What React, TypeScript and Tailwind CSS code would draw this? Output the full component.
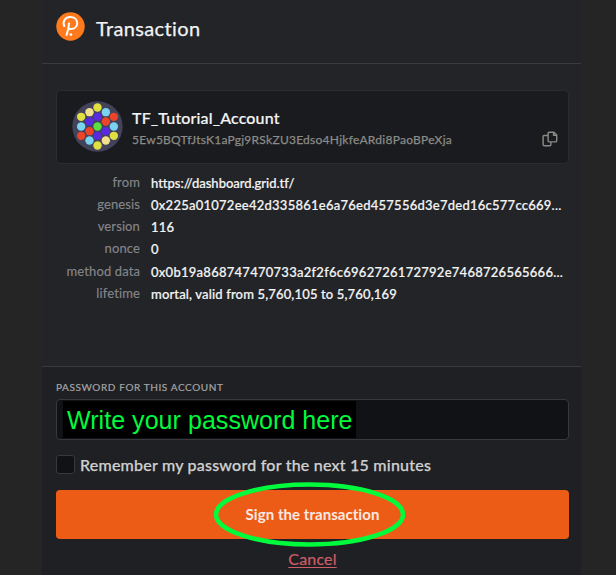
import React from 'react';

const YELLOW = '#e0e040';
const CREAM = '#f3e08c';
const SKY = '#78d4f0';
const RED = '#ec4428';
const VIOLET = '#5a2ae0';
const GREEN = '#5ce040';

const dots: [number, number, string][] = [
  [99, 41, YELLOW],
  [75, 55, CREAM],
  [124, 55, SKY],
  [50, 69, YELLOW],
  [99, 69, VIOLET],
  [148, 69, RED],
  [75, 83, VIOLET],
  [124, 83, RED],
  [50, 98, SKY],
  [99, 98, GREEN],
  [148, 98, SKY],
  [75, 112, RED],
  [124, 112, VIOLET],
  [50, 126, RED],
  [99, 126, VIOLET],
  [148, 126, YELLOW],
  [75, 140, SKY],
  [124, 140, CREAM],
  [99, 155, YELLOW],
];

function Identicon() {
  return (
    <svg className="h-[51px] w-[51px] shrink-0" viewBox="22.5 21.5 153 153">
      <circle cx="99" cy="98" r="75.5" fill="#42425a" />
      {dots.map(([x, y, fill]) => (
        <circle key={`${x}-${y}`} cx={x} cy={y} r="12.6" fill={fill} />
      ))}
    </svg>
  );
}

function Logo() {
  return (
    <svg className="h-[29px] w-[29px] shrink-0" viewBox="0 0 29 29" fill="none">
      <circle cx="14.5" cy="14.5" r="14.2" fill="#ff7a1c" />
      <path
        d="M8.3 14C6.2 9.2 9.4 5.1 14.2 5.1c4.1 0 7 2.6 7 6.1 0 3.4-2.8 5.8-6.3 5.8h-2.2M13 11.4c-.2 3.8-.9 7.4-2.4 11.4"
        stroke="#fff"
        strokeWidth="2"
        strokeLinecap="round"
      />
      <circle cx="14.9" cy="22.6" r="1.4" fill="#fff" />
    </svg>
  );
}

function CopyIcon() {
  return (
    <svg
      className="h-[16px] w-[16px]"
      viewBox="0 0 16 16"
      fill="none"
      stroke="#8b8b88"
      strokeWidth="1.4"
      strokeLinejoin="round"
    >
      <path d="M7.3 1.2h4.6l2.8 2.8v5.7q0 1.2-1.2 1.2H7.3q-1.2 0-1.2-1.2V2.4q0-1.2 1.2-1.2z" />
      <path d="M11.6 1.4v2.9h2.9" />
      <path d="M6 4.5H2.3q-1.2 0-1.2 1.2v7.8q0 1.2 1.2 1.2h5.4q1.2 0 1.2-1.2V11" />
    </svg>
  );
}

const rows = [
  { label: 'from', value: 'https://dashboard.grid.tf/', spacing: 'tracking-[-0.02px]' },
  {
    label: 'genesis',
    value: '0x225a01072ee42d335861e6a76ed457556d3e7ded16c577cc669...',
    spacing: 'tracking-[0.25px]',
  },
  { label: 'version', value: '116', spacing: 'tracking-[0.2px]' },
  { label: 'nonce', value: '0', spacing: 'tracking-[0px]' },
  {
    label: 'method data',
    value: '0x0b19a868747470733a2f2f6c6962726172792e7468726565666...',
    spacing: 'tracking-[0.26px]',
  },
  { label: 'lifetime', value: 'mortal, valid from 5,760,105 to 5,760,169', spacing: 'tracking-[0.15px]' },
];

export default function App() {
  return (
    <div className="h-[575px] w-[616px] overflow-hidden bg-[#252525] pl-[42px] font-['Lato',sans-serif] [font-variant-ligatures:none]">
      <main className="flex h-full w-[539px] flex-col bg-[#222427]">
        <header className="flex h-[64px] shrink-0 border-b border-[#3a3b3f] pl-[14px] pt-[12px]">
          <Logo />
          <h1 className="ml-[11px] mt-[2px] whitespace-nowrap text-[20px] leading-[28px] tracking-[0.36px] text-[#f2f2f2] [-webkit-text-stroke:0.25px]">
            Transaction
          </h1>
        </header>

        <section className="mx-[14px] mt-[26px] flex h-[74px] w-[513px] shrink-0 rounded-[4px] border border-[#2b2c2f] bg-[#1a1b1e] pl-[15px] pt-[10px]">
          <Identicon />
          <div className="ml-[9px] flex-1 whitespace-nowrap">
            <div className="mt-[6px] text-[16px] font-medium leading-[22px] tracking-[0.14px] text-[#f4f4f4] [-webkit-text-stroke:0.2px]">
              TF_Tutorial_Account
            </div>
            <div className="mt-[2px] text-[12px] leading-[18px] tracking-[0.26px] text-[#8b8b88] [-webkit-text-stroke:0.25px]">
              5Ew5BQTfJtsK1aPgj9RSkZU3Edso4HjkfeARdi8PaoBPeXja
            </div>
          </div>
          <button className="mr-[10px] mt-[30px] h-[16px]" aria-label="Copy address">
            <CopyIcon />
          </button>
        </section>

        <dl className="mt-[8px] shrink-0">
          {rows.map((row) => (
            <div key={row.label} className="flex h-[22.15px] whitespace-nowrap">
              <dt className="w-[98px] text-right text-[13px] leading-[21px] tracking-[0.12px] text-[#85868a] [-webkit-text-stroke:0.15px]">
                {row.label}
              </dt>
              <dd
                className={`ml-[11px] text-[13px] font-medium leading-[23px] text-[#f4f4f4] [-webkit-text-stroke:0.2px] ${row.spacing}`}
              >
                {row.value}
              </dd>
            </div>
          ))}
        </dl>

        <footer className="mt-auto h-[209px] shrink-0 border-t border-[#3a3b3f] bg-[#1e2024] px-[14px] pt-[13px]">
          <label className="block whitespace-nowrap text-[10px] leading-[14px] tracking-[0.6px] text-[#a5a5a5] [-webkit-text-stroke:0.2px]">
            PASSWORD FOR THIS ACCOUNT
          </label>
          <div className="mt-[5px] flex h-[41px] w-[513px] rounded-[4px] border border-[#38393d] bg-[#111216] pl-[6px] pt-[1px]">
            <div className="h-[37px] w-[293px] whitespace-nowrap bg-black pl-[4px] font-['Liberation_Sans',sans-serif] text-[25px] leading-[38px] tracking-[0.05px] text-[#00fb3c]">
              Write your password here
            </div>
          </div>
          <div className="mt-[15px] flex h-[19px] items-center">
            <span className="h-[19px] w-[19px] rounded-[3px] border border-[#38393d] bg-[#111216]" />
            <span className="ml-[5px] whitespace-nowrap text-[16px] font-medium leading-[20px] tracking-[0.22px] text-[#d0d0d0] [-webkit-text-stroke:0.25px]">
              Remember my password for the next 15 minutes
            </span>
          </div>
          <div className="relative mt-[16px]">
            <button className="flex h-[49px] w-[513px] items-center justify-center rounded-[4px] bg-[#ed5c16] text-[15px] font-bold tracking-[0.05px] text-[#fbe9e1]">
              Sign the transaction
            </button>
            <svg className="absolute left-[157px] top-[-8px] h-[66px] w-[194px]" viewBox="0 0 194 66" fill="none">
              <ellipse cx="96.5" cy="32.5" rx="93.5" ry="30" stroke="#00fb3c" strokeWidth="4.5" />
            </svg>
          </div>
          <div className="mt-[9px] w-[513px] text-center text-[16px] leading-[22px] tracking-[0.2px] text-[#cf5d66] [-webkit-text-stroke:0.2px]">
            <a className="underline underline-offset-2">Cancel</a>
          </div>
        </footer>
      </main>
    </div>
  );
}
